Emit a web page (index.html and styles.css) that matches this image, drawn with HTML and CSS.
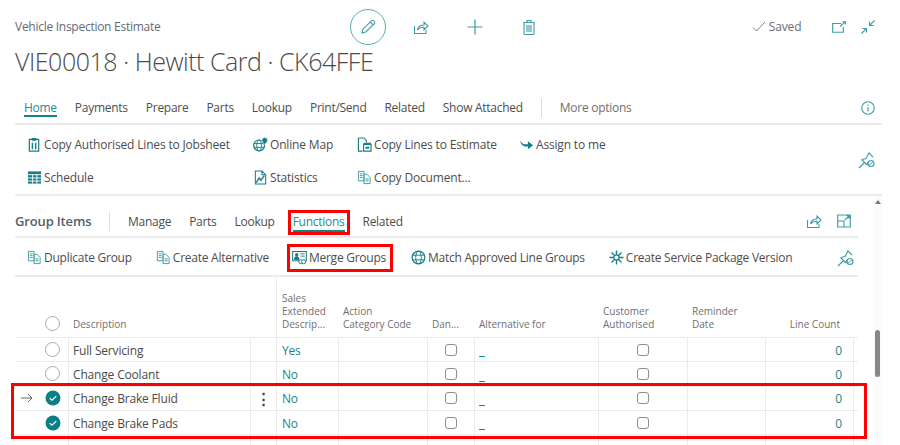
FILE: index.html
```html
<!DOCTYPE html>
<html lang="en">
<head>
<meta charset="utf-8">
<title>Vehicle Inspection Estimate</title>
<link rel="stylesheet" href="styles.css">
</head>
<body>
<svg class="defs" width="0" height="0" aria-hidden="true">
  <defs>
    <symbol id="share" viewBox="0 0 16 16"><path d="M1.500 7v7.500h11.500V11M4.500 11c.5-3.500 3-5 6.500-5V3l4 4-4 4V8.300c-3 0-5 .7-6.500 2.700z" fill="none" stroke="currentColor" stroke-width="1.100"/></symbol>
    <symbol id="pin" viewBox="0 0 18 18"><path d="M1 17l5.500-5.500M3.500 8.500l5.500 5.500M4 8.500l4-1 3-5.500 4 4.200M9 14l.8-3.200" fill="none" stroke="currentColor" stroke-width="1.100"/><circle cx="13" cy="12.500" r="3" fill="none" stroke="currentColor" stroke-width="1.100"/><path d="M11 14.500l4-4" stroke="currentColor"/></symbol>
    <symbol id="copy" viewBox="0 0 16 16"><path d="M1.500 1.500h6v10h-6zM7.500 4.500h3l3.500 3.500v6.500H7.500z" fill="#fff" stroke="currentColor"/><path d="M3 4h3M3 6h3M3 8h3M9 9.500h3.500M9 11.500h3.500" stroke="currentColor"/></symbol>
    <symbol id="check" viewBox="0 0 16 16"><circle cx="8" cy="8" r="7.500" fill="#0b7f86"/><path d="M4.700 8.300l2.300 2 4.300-4.200" fill="none" stroke="#fff" stroke-width="1.200"/></symbol>
    <symbol id="globe" viewBox="0 0 16 16"><circle cx="8" cy="8" r="6.800" fill="none" stroke="currentColor" stroke-width="1.300"/><ellipse cx="8" cy="8" rx="3" ry="6.800" fill="none" stroke="currentColor"/><path d="M1.500 5.500h13M1.500 10.500h13" stroke="currentColor"/></symbol>
  </defs>
</svg>

<main class="page">
  <header class="top">
    <div class="caption">Vehicle Inspection Estimate</div>
    <div class="page-actions">
      <button class="circle" aria-label="Edit">
        <svg class="ic16" viewBox="0 0 16 16"><path d="M2 14l1-3.800L11.500 1.700a1.300 1.300 0 0 1 1.900 0l1 1a1.300 1.300 0 0 1 0 1.900L5.800 13zM10.300 3l2.800 2.800" fill="none" stroke="currentColor" stroke-width="1.100"/></svg>
      </button>
      <span class="pa pa-share"><svg class="ic16"><use href="#share"/></svg></span>
      <span class="pa pa-plus"><svg class="ic16" viewBox="0 0 16 16"><path d="M8 .500v15M.500 8h15" stroke="currentColor" stroke-width="1.200"/></svg></span>
      <span class="pa pa-trash"><svg class="ic16" viewBox="0 0 16 16"><path d="M3 3.500h10v11a1 1 0 0 1-1 1H4a1 1 0 0 1-1-1zM2.500 3.500h11M6 3.500V1.500h4v2M6 6v7M8 6v7M10 6v7" fill="none" stroke="currentColor" stroke-width="1.100"/></svg></span>
    </div>
    <div class="status">
      <svg class="tick" viewBox="0 0 14 12"><path d="M1 6.500l3.500 3.500L13 1" fill="none" stroke="currentColor"/></svg>
      <span>Saved</span>
    </div>
    <span class="win win-open"><svg class="ic14" viewBox="0 0 14 12"><path d="M9 2.500H.700v8.800h10.600V6M8 5.500l5-4.500M10.500 .700H13.500V3.500" fill="none" stroke="currentColor" stroke-width="1.100"/></svg></span>
    <span class="win"><svg class="ic14" viewBox="0 0 14 14"><path d="M13.500.500L8.500 5.500M8.500 1.500v4h4M.500 13.500l5-5M1.500 8.500h4v4" fill="none" stroke="currentColor" stroke-width="1.100"/></svg></span>
  </header>

  <h1 class="title">VIE00018 · Hewitt Card · CK64FFE</h1>

  <nav class="tabs main-tabs">
    <a class="tab on">Home</a><a class="tab">Payments</a><a class="tab">Prepare</a><a class="tab">Parts</a><a class="tab">Lookup</a><a class="tab">Print/Send</a><a class="tab">Related</a><a class="tab">Show Attached</a>
    <i class="sep"></i>
    <a class="tab muted">More options</a>
    <svg class="info" viewBox="0 0 14 14"><circle cx="7" cy="7" r="6.300" fill="none" stroke="currentColor" stroke-width="1.100"/><path d="M7 6v4.500M7 3.500v1.200" stroke="currentColor" stroke-width="1.100"/></svg>
  </nav>

  <section class="ribbon">
    <div class="ribbon-grid">
      <a class="act"><svg class="ic16 dark" viewBox="0 0 16 16"><path d="M2.500 2.500h10v12.500h-10z" fill="none" stroke="currentColor" stroke-width="1.300"/><path d="M5 1h5v3H5zM5 6h1.500v7H5zM8.500 6H10v7H8.500z" fill="currentColor"/></svg>Copy Authorised Lines to Jobsheet</a>
      <a class="act"><svg class="ic16 dark" viewBox="0 0 16 16"><circle cx="6.500" cy="9" r="5.800" fill="none" stroke="currentColor" stroke-width="1.300"/><ellipse cx="6.500" cy="9" rx="2.500" ry="5.800" fill="none" stroke="currentColor"/><path d="M1 7h11M1 11h11" stroke="currentColor"/><path d="M12.500 .500a3 3 0 0 1 3 3c0 2-3 4.500-3 4.500s-3-2.500-3-4.500a3 3 0 0 1 3-3z" fill="currentColor" stroke="#fff" stroke-width=".6"/></svg>Online Map</a>
      <a class="act"><svg class="ic16 dark" viewBox="0 0 16 16"><path d="M1.500 1h6l2.500 3v1.500M1.500 1v14H6" fill="none" stroke="currentColor" stroke-width="1.200"/><path d="M7 8h8v7H7z" fill="none" stroke="currentColor" stroke-width="1.200"/><path d="M7 6h8v2.500H7zM9 10.500h4v2H9z" fill="currentColor"/></svg>Copy Lines to Estimate</a>
      <a class="act"><svg class="ic16 dark" viewBox="0 0 16 16"><path d="M1 3.500c2 4.500 5.500 4.500 8.500 4.300V4.500L15 8.700 9.500 13v-3C6 10.500 2 9.500 1 3.500z" fill="currentColor"/></svg>Assign to me</a>
      <a class="act"><svg class="ic16 dark" viewBox="0 0 16 16"><path d="M1 1.500h14v13H1z" fill="currentColor"/><path d="M1 5h14M1 8.500h14M1 11.800h14M6 5v9.500M10.500 5v9.500" stroke="#fff"/></svg>Schedule</a>
      <a class="act"><svg class="ic16 dark" viewBox="0 0 16 16"><path d="M2.500 1h7l4 4v10h-11zM9.500 1v4h4" fill="none" stroke="currentColor" stroke-width="1.100"/><path d="M3.500 13.500l3-5 2 2.500 3.500-5" fill="none" stroke="currentColor" stroke-width="1.500"/></svg>Statistics</a>
      <a class="act"><svg class="ic16"><use href="#copy"/></svg>Copy Document...</a>
    </div>
    <svg class="pin-ic"><use href="#pin"/></svg>
  </section>

  <section class="part">
    <nav class="tabs part-tabs">
      <strong class="part-title">Group Items</strong>
      <i class="sep"></i>
      <a class="tab">Manage</a><a class="tab">Parts</a><a class="tab">Lookup</a><a class="tab on boxed">Functions</a><a class="tab">Related</a>
      <span class="part-icons">
        <svg class="ic16"><use href="#share"/></svg>
        <svg class="ic14" viewBox="0 0 14 14"><path d="M.700 1h12.600v12H.700zM.700 7H7v6M8 6l4-4M9.500 1.800h2.800v2.700" fill="none" stroke="currentColor" stroke-width="1.100"/></svg>
      </span>
    </nav>
    <div class="part-ribbon">
      <a class="act"><svg class="ic16"><use href="#copy"/></svg>Duplicate Group</a>
      <a class="act"><svg class="ic16"><use href="#copy"/></svg>Create Alternative</a>
      <a class="act boxed-act"><svg class="ic16 dark" viewBox="0 0 16 16"><path d="M.700 1.500h14.600v10H.700z" fill="none" stroke="currentColor" stroke-width="1.100"/><circle cx="5" cy="5" r="1.800" fill="currentColor"/><path d="M2.500 10c0-2 1-3 2.500-3s2.500 1 2.500 3zM9 4h4.500M9 6.500h4.500" fill="currentColor" stroke="currentColor"/><circle cx="9.500" cy="12.500" r="2.200" fill="#fff" stroke="currentColor"/><circle cx="12.500" cy="12.500" r="2.200" fill="#fff" stroke="currentColor"/></svg>Merge Groups</a>
      <a class="act"><svg class="ic16 dark"><use href="#globe"/></svg>Match Approved Line Groups</a>
      <a class="act"><svg class="ic16 dark" viewBox="0 0 16 16"><circle cx="8" cy="8" r="2.800" fill="none" stroke="currentColor" stroke-width="1.400"/><path d="M8 .500v4.500M8 11v4.500M.500 8H5M11 8h4.500M2.700 2.700L6 6M10 10l3.300 3.300M13.300 2.700L10 6M6 10l-3.300 3.300" stroke="currentColor" stroke-width="1.500"/></svg>Create Service Package Version</a>
      <svg class="pin-ic part-pin"><use href="#pin"/></svg>
    </div>

    <div class="grid">
      <div class="row head">
        <div class="c"></div>
        <div class="c mark"><span class="radio"></span></div>
        <div class="c">Description</div>
        <div class="c"></div>
        <div class="c ruled">Sales Extended Descrip...</div>
        <div class="c">Action<br>Category Code</div>
        <div class="c">Dan...</div>
        <div class="c">Alternative for</div>
        <div class="c">Customer<br>Authorised</div>
        <div class="c">Reminder<br>Date</div>
        <div class="c end">Line Count</div>
      </div>
      <div class="row">
        <div class="c"></div><div class="c mark"><span class="radio"></span></div><div class="c">Full Servicing</div><div class="c"></div>
        <div class="c link">Yes</div><div class="c"></div><div class="c box-c"><span class="cb"></span></div><div class="c dash"><span>_</span></div>
        <div class="c box-c"><span class="cb"></span></div><div class="c"></div><div class="c end link">0</div><div class="c"></div>
      </div>
      <div class="row">
        <div class="c"></div><div class="c mark"><span class="radio"></span></div><div class="c">Change Coolant</div><div class="c"></div>
        <div class="c link">No</div><div class="c"></div><div class="c box-c"><span class="cb"></span></div><div class="c dash"><span>_</span></div>
        <div class="c box-c"><span class="cb"></span></div><div class="c"></div><div class="c end link">0</div><div class="c"></div>
      </div>
      <div class="picked">
        <div class="row">
          <div class="c arrow"><svg viewBox="0 0 12 10"><path d="M0 5h11M7 1l4 4-4 4" fill="none" stroke="currentColor" stroke-width=".9"/></svg></div><div class="c mark"><svg class="ic16"><use href="#check"/></svg></div><div class="c">Change Brake Fluid</div><div class="c dots">⋮</div>
          <div class="c link">No</div><div class="c"></div><div class="c box-c"><span class="cb"></span></div><div class="c dash"><span>_</span></div>
          <div class="c box-c"><span class="cb"></span></div><div class="c"></div><div class="c end link">0</div><div class="c"></div>
        </div>
        <div class="row">
          <div class="c"></div><div class="c mark"><svg class="ic16"><use href="#check"/></svg></div><div class="c">Change Brake Pads</div><div class="c"></div>
          <div class="c link">No</div><div class="c"></div><div class="c box-c"><span class="cb"></span></div><div class="c dash"><span>_</span></div>
          <div class="c box-c"><span class="cb"></span></div><div class="c"></div><div class="c end link">0</div><div class="c"></div>
        </div>
      </div>
      <div class="row">
        <div class="c"></div><div class="c mark"></div><div class="c"></div><div class="c"></div><div class="c"></div><div class="c"></div><div class="c"></div><div class="c"></div><div class="c"></div><div class="c"></div><div class="c"></div><div class="c"></div>
      </div>
    </div>
    <div class="scrollbar"><span class="up"></span><span class="thumb"></span></div>
  </section>
</main>
</body>
</html>
```
FILE: styles.css
```css
* { box-sizing: border-box; }
html, body { margin: 0; height: 445px; overflow: hidden; background: #fff; }
body { font: 12px/17px "Open Sans", "Noto Sans", sans-serif; letter-spacing: -.17px; color: #4a4a4a; }
.defs { position: absolute; }
svg { display: block; flex: none; }
button { all: unset; }
.ic16 { width: 16px; height: 16px; color: #3c9ca2; }
.ic14 { width: 14px; height: 14px; color: #3c9ca2; }
.dark { color: #167f86; }
.page { width: 882px; padding: 10px 0 0 15px; }

.top { display: flex; align-items: center; height: 33px; }
.caption { width: 336px; margin-right: 6px; color: #636b75; letter-spacing: -.27px; }
.page-actions { display: flex; align-items: center; }
.circle { width: 34px; height: 34px; border: 1px solid #54adb1; border-radius: 50%; display: flex; align-items: center; justify-content: center; }
.pa { display: flex; justify-content: center; width: 54px; }
.pa-share { margin-left: 8px; }
.status { display: flex; align-items: center; gap: 3px; margin-left: 196px; color: #69707a; width: 75px; }
.tick { width: 14px; height: 12px; color: #7b828b; }
.win { width: 29px; display: flex; justify-content: center; }

.title { margin: 0; font: 300 25px/36px "Open Sans", sans-serif; color: #4a4a4a; letter-spacing: -.47px; }

.tabs { display: flex; align-items: center; letter-spacing: -.27px; }
.tab { display: block; white-space: nowrap; position: relative; color: #4d4d4d; }
.tab.on { color: #2b8a90; }
.tab.on::after { content: ""; position: absolute; left: 0; right: 0; bottom: -2px; height: 2px; background: #138389; }
.muted { color: #6f6f6f; }
.sep { width: 1px; height: 20px; background: #dedede; }
.main-tabs { height: 42px; margin-top: 4px; padding: 9px 7px 0 9px; border-bottom: 2px solid #ececec; gap: 18px; }
.main-tabs .on::after { bottom: -1px; }
.info { width: 14px; height: 14px; margin-left: auto; color: #3c9ca2; }

.ribbon { display: flex; height: 71px; padding: 3px 6px 0 12px; border-bottom: 2px solid #ececec; }
.ribbon-grid { display: grid; grid-template-columns: 226px 104px 162px auto; grid-auto-rows: 33px; flex: 1; }
.act { display: flex; align-items: center; gap: 0; white-space: nowrap; color: #4d4d4d; }
.act .ic16 { width: 15px; height: 15px; margin-right: 2px; }
.pin-ic { width: 18px; height: 18px; color: #3c9ca2; margin-top: 23px; }

.part { position: relative; width: 843px; }
.part-tabs { height: 42px; padding-top: 10px; gap: 18px; border-bottom: 2px solid #ececec; }
.part-title { font-weight: 600; font-size: 13px; letter-spacing: -.15px; color: #57606a; width: 80px; margin-right: -4px; white-space: nowrap; }
.part-icons { display: flex; gap: 15px; align-items: center; margin-left: auto; padding-right: 7px; }
.boxed::before { content: ""; position: absolute; left: -5px; right: -5px; top: -3px; bottom: -5px; border: 3px solid #f00; }
.part-ribbon { display: flex; align-items: center; gap: 24px; height: 39px; padding: 2px 3px 0 12px; border-bottom: 2px solid #ececec; letter-spacing: -.25px; }
.boxed-act { height: 18px; margin: 0 -1px; padding-right: 2px; outline: 3px solid #f00; outline-offset: 2px; }
.part-pin { margin: 0 0 0 auto; }

.grid { width: 843px; }
.row { display: grid; grid-template-columns: 39px 14px 182px 26px 62px 89px 47px 124px 89px 78px 88px 5px; height: 24.300px; border-top: 1px solid #ebebeb; }
.row.head { height: 60px; border-top: 0; font-size: 10px; line-height: 13px; letter-spacing: 0; color: #6f6f6f; }
.c { display: flex; align-items: center; padding-left: 4px; padding-top: 1px; border-left: 1px solid #ebebeb; min-width: 0; }
.c:first-child, .c.mark { border-left: 0; padding: 0; justify-content: center; }
.row > .c:nth-child(2) { justify-content: flex-start; margin-left: -9px; width: 23px; }
.head .c { border-left: 0; align-items: flex-end; padding-bottom: 6px; padding-left: 5px; }
.head .c.mark { padding-left: 0; }
.head .ruled { border-left: 1px solid #ebebeb; }
.radio { display: block; width: 15px; height: 15px; border: 1px solid #a5aab0; border-radius: 50%; background: #fff; flex: none; }
.link { color: #18858c; padding-left: 5px; }
.end { justify-content: flex-end; padding-right: 11px; }
.head .end { padding-right: 13px; }
.box-c { justify-content: center; padding: 0; }
.cb { width: 12px; height: 12px; border: 1px solid #8e8e8e; border-radius: 3px; display: block; }
.dash { color: #18858c; font-weight: 700; font-size: 14px; line-height: 17px; align-items: flex-end; padding-bottom: 3px; }
.arrow { color: #555; }
.arrow svg { width: 12px; height: 10px; margin-right: 15px; }
.dots { justify-content: center; padding: 0; font-size: 15px; font-weight: 700; color: #444; }
.picked { position: relative; }
.picked::after { content: ""; position: absolute; left: -4px; right: -9px; top: -3px; bottom: -5px; border: 3px solid #f00; pointer-events: none; }

.scrollbar { position: absolute; left: 859px; top: 1px; width: 8px; height: 248px; background: #fafafa; }
.up { display: block; width: 0; margin: 3px auto 0; border: 3px solid transparent; border-top: 0; border-bottom: 4px solid #777; }
.thumb { position: absolute; left: 1px; top: 133px; width: 5px; height: 47px; background: #888; border-radius: 3px; }
```
